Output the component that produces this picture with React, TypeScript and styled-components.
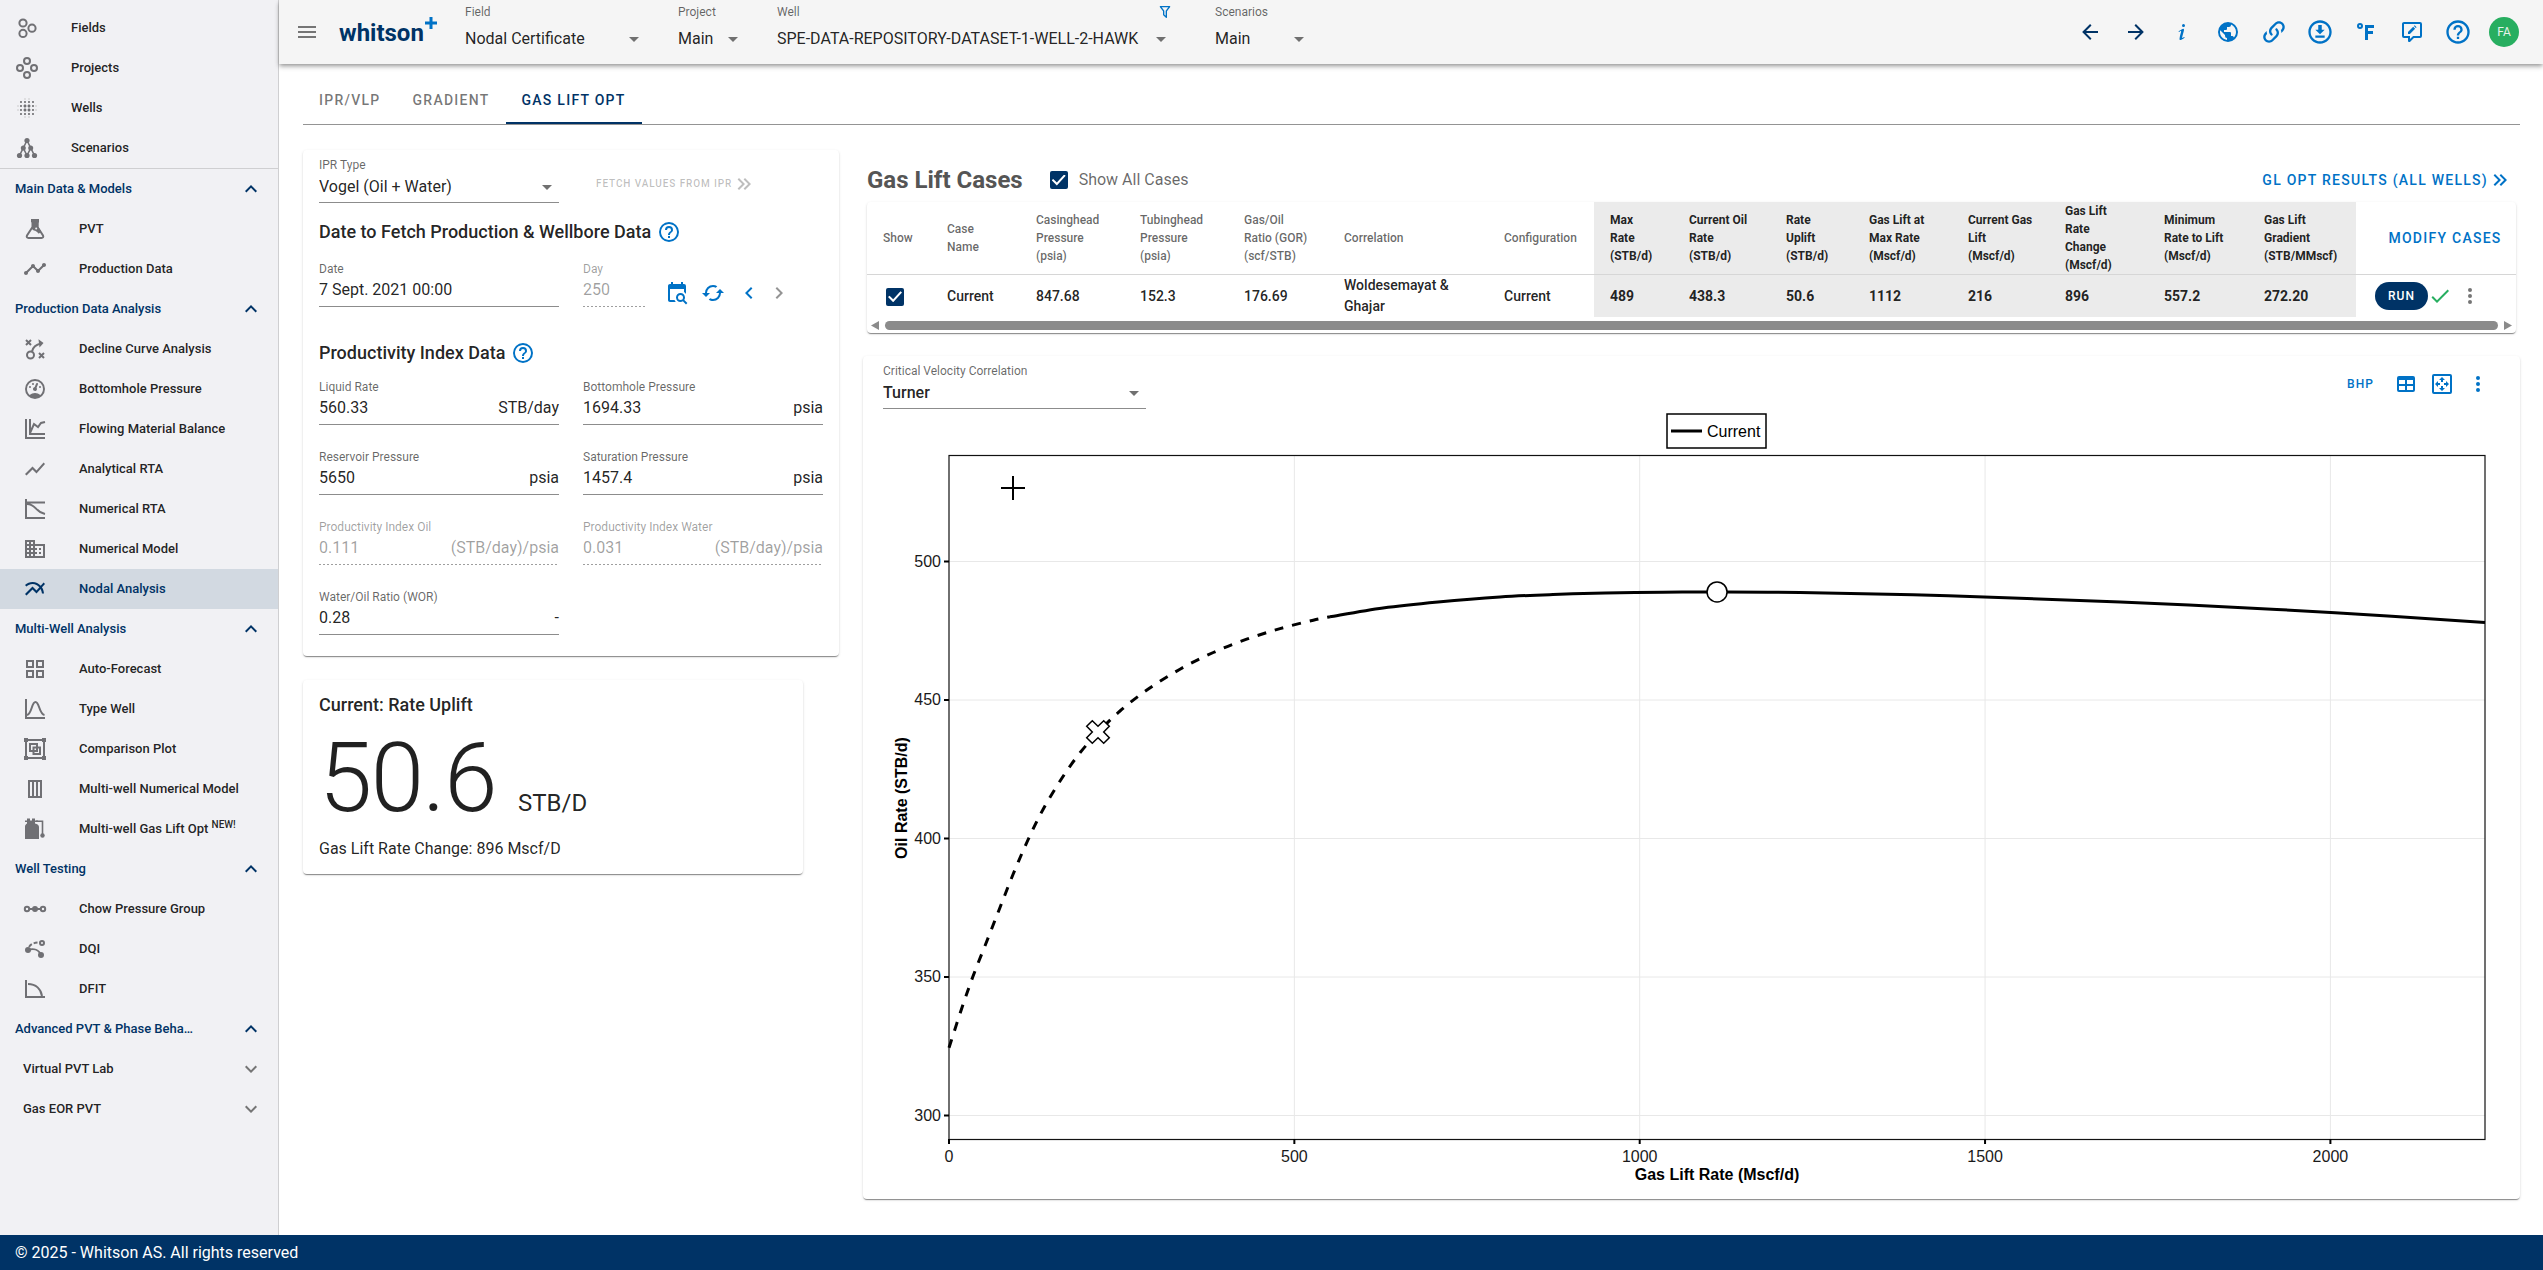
import React, { useId } from "react";
import styled, { createGlobalStyle, css } from "styled-components";
import { MdBlurOn, MdDomain, MdMultilineChart, MdShowChart, MdTimeline } from "react-icons/md";

const NAVY = "#003366";
const BLUE = "#0072c6";
const INK = "rgba(0, 0, 0, 0.87)";
const MUTED = "rgba(0, 0, 0, 0.6)";
const FAINT = "rgba(0, 0, 0, 0.38)";

const GlobalStyle = createGlobalStyle`
  *, *::before, *::after { box-sizing: border-box; }
  body {
    margin: 0;
    background: #fff;
    color: ${INK};
    font-family: Roboto, "Noto Sans", sans-serif;
    font-size: 16px;
    line-height: 24px;
  }
  button, input, select { font: inherit; color: inherit; }
  h1, h2, h3, p { margin: 0; }
`;

/* ---------- icons ---------- */

const PATHS = {
  menu: "M3,6H21V8H3V6M3,11H21V13H3V11M3,16H21V18H3V16Z",
  menuDown: "M7,10L12,15L17,10H7Z",
  left: "M20,11V13H8L13.5,18.5L12.08,19.92L4.16,12L12.08,4.08L13.5,5.5L8,11H20Z",
  right: "M4,11V13H16L10.5,18.5L11.92,19.92L19.84,12L11.92,4.08L10.5,5.5L16,11H4Z",
  info: "M13.5,4A1.5,1.5 0 0,0 12,5.5A1.5,1.5 0 0,0 13.5,7A1.5,1.5 0 0,0 15,5.5A1.5,1.5 0 0,0 13.5,4M13.14,8.77C11.95,8.87 8.7,11.46 8.7,11.46C8.5,11.61 8.56,11.6 8.72,11.88C8.88,12.15 8.86,12.17 9.05,12.04C9.25,11.91 9.58,11.7 10.13,11.36C12.25,10 10.47,13.14 9.56,18.43C9.2,21.05 11.56,19.7 12.17,19.3C12.77,18.91 14.38,17.8 14.54,17.69C14.76,17.54 14.6,17.42 14.43,17.17C14.31,17 14.19,17.12 14.19,17.12C13.54,17.55 12.35,18.45 12.19,17.88C12,17.31 13.22,13.4 13.89,10.71C14,10.07 14.3,8.67 13.14,8.77Z",
  earth: "M17.9,17.39C17.64,16.59 16.89,16 16,16H15V13A1,1 0 0,0 14,12H8V10H10A1,1 0 0,0 11,9V7H13A2,2 0 0,0 15,5V4.59C17.93,5.77 20,8.64 20,12C20,14.08 19.2,15.97 17.9,17.39M11,19.93C7.05,19.44 4,16.08 4,12C4,11.38 4.08,10.78 4.21,10.21L9,15V16A2,2 0 0,0 11,18M12,2A10,10 0 0,0 2,12A10,10 0 0,0 12,22A10,10 0 0,0 22,12A10,10 0 0,0 12,2Z",
  link: "M10.59,13.41C11,13.8 11,14.44 10.59,14.83C10.2,15.22 9.56,15.22 9.17,14.83C7.22,12.88 7.22,9.71 9.17,7.76V7.76L12.71,4.22C14.66,2.27 17.83,2.27 19.78,4.22C21.73,6.17 21.73,9.34 19.78,11.29L18.29,12.78C18.3,11.96 18.17,11.14 17.89,10.36L18.36,9.88C19.54,8.71 19.54,6.81 18.36,5.64C17.19,4.46 15.29,4.46 14.12,5.64L10.59,9.17C9.41,10.34 9.41,12.24 10.59,13.41M13.41,9.17C13.8,8.78 14.44,8.78 14.83,9.17C16.78,11.12 16.78,14.29 14.83,16.24V16.24L11.29,19.78C9.34,21.73 6.17,21.73 4.22,19.78C2.27,17.83 2.27,14.66 4.22,12.71L5.71,11.22C5.7,12.04 5.83,12.86 6.11,13.65L5.64,14.12C4.46,15.29 4.46,17.19 5.64,18.36C6.81,19.54 8.71,19.54 9.88,18.36L13.41,14.83C14.59,13.66 14.59,11.76 13.41,10.59C13,10.2 13,9.56 13.41,9.17Z",
  download: "M8 17V15H16V17H8M16 10L12 14L8 10H10.5V6H13.5V10H16M12 2C17.5 2 22 6.5 22 12C22 17.5 17.5 22 12 22C6.5 22 2 17.5 2 12C2 6.5 6.5 2 12 2M12 4C7.58 4 4 7.58 4 12C4 16.42 7.58 20 12 20C16.42 20 20 16.42 20 12C20 7.58 16.42 4 12 4Z",
  fahrenheit: "M11,20V5H20V8H14V11H19V14H14V20H11M6,3A3,3 0 0,1 9,6A3,3 0 0,1 6,9A3,3 0 0,1 3,6A3,3 0 0,1 6,3M6,5A1,1 0 0,0 5,6A1,1 0 0,0 6,7A1,1 0 0,0 7,6A1,1 0 0,0 6,5Z",
  comment: "M9,22A1,1 0 0,1 8,21V18H4A2,2 0 0,1 2,16V4C2,2.89 2.9,2 4,2H20A2,2 0 0,1 22,4V16A2,2 0 0,1 20,18H13.9L10.2,21.71C10,21.9 9.75,22 9.5,22H9M10,16V19.08L13.08,16H20V4H4V16H10M8,13.9V12L13.2,6.8L15.1,8.7L9.9,13.9H8M13.9,6.1L14.7,5.3L16.6,7.2L15.8,8L13.9,6.1Z",
  help: "M11,18H13V16H11V18M12,2A10,10 0 0,0 2,12A10,10 0 0,0 12,22A10,10 0 0,0 22,12A10,10 0 0,0 12,2M12,20C7.59,20 4,16.41 4,12C4,7.59 7.59,4 12,4C16.41,4 20,7.59 20,12C20,16.41 16.41,20 12,20M12,6A4,4 0 0,0 8,10H10A2,2 0 0,1 12,8A2,2 0 0,1 14,10C14,12 11,11.75 11,15H13C13,12.75 16,12.5 16,10A4,4 0 0,0 12,6Z",
  filter: "M15,19.88C15.04,20.18 14.94,20.5 14.71,20.71C14.32,21.1 13.69,21.1 13.3,20.71L9.29,16.7C9.06,16.47 8.96,16.16 9,15.87V10.75L4.21,4.62C3.87,4.19 3.95,3.56 4.38,3.22C4.57,3.08 4.78,3 5,3V3H19V3C19.22,3 19.43,3.08 19.62,3.22C20.05,3.56 20.13,4.19 19.79,4.62L15,10.75V19.88M7.04,5L11,10.06V15.58L13,17.58V10.05L16.96,5H7.04Z",
  doubleRight: "M5.59,7.41L7,6L13,12L7,18L5.59,16.59L10.17,12L5.59,7.41M11.59,7.41L13,6L19,12L13,18L11.59,16.59L16.17,12L11.59,7.41Z",
  calendarSearch: "M15.5,12C18,12 20,14 20,16.5C20,17.38 19.75,18.21 19.31,18.9L22.39,22L21,23.39L17.88,20.32C17.19,20.75 16.37,21 15.5,21C13,21 11,19 11,16.5C11,14 13,12 15.5,12M15.5,14A2.5,2.5 0 0,0 13,16.5A2.5,2.5 0 0,0 15.5,19A2.5,2.5 0 0,0 18,16.5A2.5,2.5 0 0,0 15.5,14M5,3H6V1H8V3H16V1H18V3H19A2,2 0 0,1 21,5V13.03C20.5,12.23 19.81,11.54 19,11V8H5V19H9.5C9.81,19.75 10.26,20.42 10.81,21H5C3.89,21 3,20.1 3,19V5C3,3.89 3.89,3 5,3Z",
  cached: "M19,8L15,12H18A6,6 0 0,1 12,18C11,18 10.03,17.75 9.2,17.3L7.74,18.76C8.97,19.54 10.43,20 12,20A8,8 0 0,0 20,12H23M6,12A6,6 0 0,1 12,6C13,6 13.97,6.25 14.8,6.7L16.26,5.24C15.03,4.46 13.57,4 12,4A8,8 0 0,0 4,12H1L5,16L9,12",
  chevronLeft: "M15.41,16.58L10.83,12L15.41,7.41L14,6L8,12L14,18L15.41,16.58Z",
  chevronRight: "M8.59,16.58L13.17,12L8.59,7.41L10,6L16,12L10,18L8.59,16.58Z",
  chevronUp: "M7.41,15.41L12,10.83L16.59,15.41L18,14L12,8L6,14L7.41,15.41Z",
  chevronDown: "M7.41,8.58L12,13.17L16.59,8.58L18,10L12,16L6,10L7.41,8.58Z",
  check: "M21,7L9,19L3.5,13.5L4.91,12.09L9,16.17L19.59,5.59L21,7Z",
  dots: "M12,16A2,2 0 0,1 14,18A2,2 0 0,1 12,20A2,2 0 0,1 10,18A2,2 0 0,1 12,16M12,10A2,2 0 0,1 14,12A2,2 0 0,1 12,14A2,2 0 0,1 10,12A2,2 0 0,1 12,10M12,4A2,2 0 0,1 14,6A2,2 0 0,1 12,8A2,2 0 0,1 10,6A2,2 0 0,1 12,4Z",
  table: "M5,4H19A2,2 0 0,1 21,6V18A2,2 0 0,1 19,20H5A2,2 0 0,1 3,18V6A2,2 0 0,1 5,4M5,8V12H11V8H5M13,8V12H19V8H13M5,14V18H11V14H5M13,14V18H19V14H13Z",
  gauge: "M12,2A10,10 0 0,0 2,12A10,10 0 0,0 12,22A10,10 0 0,0 22,12A10,10 0 0,0 12,2M12,4A8,8 0 0,1 20,12C20,14.4 19,16.5 17.3,18C15.9,16.7 14,16 12,16C10,16 8.2,16.7 6.7,18C5,16.5 4,14.4 4,12A8,8 0 0,1 12,4M14,5.89C13.62,5.9 13.26,6.15 13.1,6.54L11.81,9.77L11.71,10C11,10.13 10.41,10.6 10.14,11.26C9.73,12.29 10.23,13.45 11.26,13.86C12.29,14.27 13.45,13.77 13.86,12.74C14.12,12.08 14,11.32 13.57,10.76L13.67,10.5L14.96,7.29L14.97,7.26C15.17,6.75 14.92,6.17 14.41,5.96C14.28,5.91 14.15,5.89 14,5.89M10,6A1,1 0 0,0 9,7A1,1 0 0,0 10,8A1,1 0 0,0 11,7A1,1 0 0,0 10,6M7,9A1,1 0 0,0 6,10A1,1 0 0,0 7,11A1,1 0 0,0 8,10A1,1 0 0,0 7,9M17,9A1,1 0 0,0 16,10A1,1 0 0,0 17,11A1,1 0 0,0 18,10A1,1 0 0,0 17,9Z",
};

type PathName = keyof typeof PATHS;

const Icon = ({ name, size = 24 }: { name: PathName; size?: number }) => (
  <svg width={size} height={size} viewBox="0 0 24 24" fill="currentColor" aria-hidden="true">
    <path d={PATHS[name]} />
  </svg>
);

const Line = ({ children, width = 2 }: { children: React.ReactNode; width?: number }) => (
  <svg width={24} height={24} viewBox="0 0 24 24" fill="none" stroke="currentColor" strokeWidth={width} aria-hidden="true">
    {children}
  </svg>
);

const FitIcon = () => (
  <Line>
    <rect x="3" y="3" width="18" height="18" rx="1" />
    <path
      stroke="none"
      fill="currentColor"
      d="M12 5l3 3h-2v2h-2V8H9zM12 19l3-3h-2v-2h-2v2H9zM5 12l3-3v2h2v2H8v2zM19 12l-3-3v2h-2v2h2v2z"
    />
  </Line>
);

const NAV_ICONS: Record<string, React.ReactNode> = {
  fields: (
    <Line>
      <circle cx="8" cy="7" r="3.6" />
      <circle cx="8" cy="17.4" r="3.6" />
      <circle cx="17" cy="12.2" r="3.6" />
    </Line>
  ),
  projects: (
    <Line>
      <circle cx="12" cy="5" r="3" />
      <circle cx="5" cy="12" r="3" />
      <circle cx="19" cy="12" r="3" />
      <circle cx="12" cy="19" r="3" />
    </Line>
  ),
  wells: <MdBlurOn size={24} />,
  scenarios: (
    <Line width={1.6}>
      <path d="M12 4.5L4.5 19.5M12 4.5l7.5 15M12 19.5L8.2 12M12 19.5l3.8-7.5" />
      <g fill="currentColor" stroke="none">
        <circle cx="12" cy="4.5" r="2.6" />
        <circle cx="8.3" cy="12" r="2.5" />
        <circle cx="15.7" cy="12" r="2.5" />
        <circle cx="4.5" cy="19.5" r="2.6" />
        <circle cx="12" cy="19.5" r="2.6" />
        <circle cx="19.5" cy="19.5" r="2.6" />
      </g>
    </Line>
  ),
  flask: (
    <Line>
      <path d="M9.5 4v6L4 18.5C3.3 20 4 21 5.5 21h13c1.5 0 2.2-1 1.5-2.5L14.5 10V4" />
      <path fill="currentColor" stroke="none" d="M8 2h8v3l-.6 1v4l2.8 4.400-2.400 2.300c-1.600-1.700-3.200-3.300-5-3.300l-2-1.400 1-2.200V6L8 5z" />
      <circle cx="13.2" cy="11.6" r="1" fill="#f1f1f4" stroke="none" />
    </Line>
  ),
  timeline: <MdTimeline size={24} />,
  strategy: (
    <Line>
      <path d="M3 3l5 5M8 3L3 8M16 16l5 5M21 16l-5 5" />
      <circle cx="7.5" cy="18" r="3.5" />
      <path d="M9 14.5C10 10 13 7.5 18 6.5" />
      <path fill="currentColor" stroke="none" d="M15.5 2.2L20.5 6l-4 4.5z" />
    </Line>
  ),
  gauge: <Icon name="gauge" />,
  balance: (
    <Line>
      <path d="M3 2v19h19M7 2v15h15M7 16l4-9 4 3 3-4 4-1" />
    </Line>
  ),
  trend: <MdShowChart size={24} />,
  decline: (
    <Line>
      <path d="M3 2v19h19M3 5.5h19M4 7c9 0 8 8 18 10" />
    </Line>
  ),
  domain: <MdDomain size={24} />,
  nodal: <MdMultilineChart size={24} />,
  grid: (
    <Line>
      <path d="M4 4h6v6H4zM14 4h6v6h-6zM4 14h6v6H4zM14 14h6v6h-6z" />
    </Line>
  ),
  bell: (
    <Line>
      <path d="M3 2v19h19" />
      <path d="M4 18C9 17 8.5 5 12.5 5S16 17 21.5 18" />
    </Line>
  ),
  group: (
    <Line>
      <path d="M3 3h18v18H3z" />
      <path d="M7 7h7v7H7zM10.5 10.5h6.5v6.5h-6.5z" />
      <path fill="currentColor" stroke="none" d="M1 1h4v4H1zM19 1h4v4h-4zM1 19h4v4H1zM19 19h4v4h-4z" />
    </Line>
  ),
  columns: (
    <Line>
      <path d="M6 4h12v16H6zM10 4v16M14 4v16" />
    </Line>
  ),
  tanks: (
    <Line width={1.6}>
      <path fill="currentColor" stroke="none" d="M2 22V9.5C2 8 3 7 4 6.5V5H2V3.400h2V1.500h3v1.900h2V1.500h3v1.900h3V5h-3v1.500c2.500.5 4 1.800 4 3.500v12z" />
      <path d="M13 4.200h6.500V17" />
      <circle cx="19.5" cy="18.5" r="2.2" fill="currentColor" stroke="none" />
    </Line>
  ),
  chow: (
    <Line>
      <circle cx="4" cy="12" r="2.2" />
      <circle cx="20" cy="12" r="2.2" />
      <circle cx="12" cy="12" r="3" fill="currentColor" stroke="none" />
      <path d="M6.5 12h11" />
    </Line>
  ),
  dqi: (
    <Line>
      <circle cx="19" cy="6" r="2" />
      <circle cx="5" cy="13" r="3" fill="currentColor" stroke="none" />
      <circle cx="18" cy="18" r="3" fill="currentColor" stroke="none" />
      <path d="M5 13c6-2 11 0 13 5" />
      <path d="M6 10c2-3 5-4.500 11-4.500" strokeDasharray="4 2" />
    </Line>
  ),
  dfit: (
    <Line>
      <path d="M3 3v17h19M5 7c8 0 13 5 14 12" />
    </Line>
  ),
};

/* ---------- shell ---------- */

const Shell = styled.div`
  display: grid;
  grid-template-columns: 279px minmax(0, 1fr);
  grid-template-rows: 1fr auto;
  min-height: 100vh;
`;

const Footer = styled.footer`
  grid-column: 1 / -1;
  padding: 6px 15px 5px;
  background: ${NAVY};
  color: #fff;
`;

const Sidebar = styled.nav`
  padding-top: 8px;
  background: #f1f1f4;
  border-right: 1px solid #cfcfd1;
  font-size: 13px;
  font-weight: 500;
`;

const NavList = styled.ul<{ $ruled?: boolean }>`
  margin: 0;
  padding: 0;
  list-style: none;
  ${(p) => p.$ruled && css`border-bottom: 1px solid #cfcfd1;`}
`;

const NavItem = styled.a<{ $nested?: boolean; $active?: boolean }>`
  display: flex;
  align-items: center;
  gap: 32px;
  height: 40px;
  padding-left: ${(p) => (p.$nested ? 23 : 15)}px;
  text-decoration: none;
  white-space: nowrap;
  color: ${(p) => (p.$active ? NAVY : INK)};
  background: ${(p) => (p.$active ? "#d2d9e1" : "transparent")};
  svg { flex: none; color: ${(p) => (p.$active ? NAVY : "#707074")}; }
`;

const NavSup = styled.sup`
  font-size: 10px;
  line-height: 10px;
`;

const NavGroup = styled.button<{ $sub?: boolean }>`
  display: flex;
  align-items: center;
  justify-content: space-between;
  width: 100%;
  height: 40px;
  padding: 0 15px 0 ${(p) => (p.$sub ? 23 : 15)}px;
  border: 0;
  background: none;
  color: ${(p) => (p.$sub ? INK : NAVY)};
  text-align: left;
  white-space: nowrap;
  svg { flex: none; color: ${(p) => (p.$sub ? "#757575" : NAVY)}; }
`;

const Page = styled.div`
  display: flex;
  flex-direction: column;
  min-width: 0;
`;

/* ---------- top bar ---------- */

const TopBar = styled.header`
  display: flex;
  align-items: flex-start;
  height: 64px;
  padding: 0 16px;
  background: #f5f5f5;
  box-shadow: 0 2px 4px -1px rgba(0, 0, 0, 0.3), 0 3px 5px rgba(0, 0, 0, 0.2);
`;

const IconButton = styled.button<{ $color?: string; $width?: number; $height?: number }>`
  display: inline-flex;
  align-items: center;
  justify-content: center;
  flex: none;
  width: ${(p) => p.$width ?? 24}px;
  height: ${(p) => p.$height ?? 24}px;
  padding: 0;
  border: 0;
  background: none;
  color: ${(p) => p.$color ?? BLUE};
`;

const Logo = styled.a`
  display: flex;
  align-items: center;
  flex: 0 0 126px;
  height: 64px;
  margin-left: 20px;
  padding-top: 1px;
  color: ${NAVY};
  font-size: 24px;
  font-weight: 700;
  text-decoration: none;
  svg { align-self: flex-start; margin: 16px 0 0 1px; color: ${BLUE}; }
`;

const BarFields = styled.div`
  display: flex;
  gap: 32px;
  padding-top: 1px;
  > :last-child { margin-left: 10px; }
`;

const BarField = styled.div<{ $width: number }>`
  width: ${(p) => p.$width}px;
`;

const BarLabelRow = styled.div`
  display: flex;
  justify-content: space-between;
  align-items: center;
  height: 22px;
  color: ${MUTED};
  font-size: 12px;
  svg { color: ${BLUE}; }
`;

const SelectBox = styled.div<{ $height: number }>`
  display: grid;
  grid-template-columns: minmax(0, 1fr);
  align-items: center;
  height: ${(p) => p.$height}px;
  > * { grid-area: 1 / 1; }
  svg { justify-self: end; pointer-events: none; color: #707070; }
`;

const Select = styled.select<{ $strong?: boolean }>`
  width: 100%;
  padding: 0;
  border: 0;
  appearance: none;
  background: none;
  font-weight: ${(p) => (p.$strong ? 500 : 400)};
`;

const BarActions = styled.div`
  display: flex;
  align-items: center;
  height: 64px;
  margin-left: auto;
`;

const AvatarButton = styled.button`
  width: 30px;
  height: 30px;
  margin: 0 8px;
  padding: 0;
  border: 0;
  border-radius: 50%;
  background: #27ae60;
  color: #e6f2ea;
  font-size: 12px;
  line-height: 30px;
`;

/* ---------- content ---------- */

const Content = styled.main`
  padding: 12px 23px 36px 24px;
`;

const Tabs = styled.div`
  display: flex;
  border-bottom: 1px solid #949494;
`;

const Tab = styled.button<{ $active?: boolean }>`
  height: 48px;
  padding: 2px 16px 0;
  border: 0;
  border-bottom: 2px solid ${(p) => (p.$active ? NAVY : "transparent")};
  background: none;
  color: ${(p) => (p.$active ? NAVY : "rgba(0, 0, 0, 0.54)")};
  font-size: 14px;
  font-weight: 500;
  letter-spacing: 0.09em;
`;

const Columns = styled.div`
  display: grid;
  grid-template-columns: 536px minmax(0, 1fr);
  gap: 24px;
  align-items: start;
  padding-top: 25px;
`;

const Stack = styled.div`
  display: flex;
  flex-direction: column;
  gap: 24px;
`;

const cardSurface = css`
  border-radius: 4px;
  background: #fff;
  box-shadow: 0 2px 1px -1px rgba(0, 0, 0, 0.3), 0 1px 1px rgba(0, 0, 0, 0.16), 0 1px 3px rgba(0, 0, 0, 0.12);
`;

const FormCard = styled.section`
  ${cardSurface}
  padding: 5px 16px 21px;
`;

const FieldGrid = styled.div`
  display: grid;
  grid-template-columns: 1fr 1fr;
  gap: 22px 24px;
`;

const FieldRoot = styled.div<{ $disabled?: boolean; $width?: number }>`
  display: flex;
  flex-direction: column;
  width: ${(p) => (p.$width ? `${p.$width}px` : "auto")};
  height: 48px;
  color: ${(p) => (p.$disabled ? FAINT : INK)};
  background: ${(p) =>
    p.$disabled
      ? "repeating-linear-gradient(to right, rgba(0, 0, 0, 0.38) 0 2px, transparent 2px 4px) bottom / 100% 1px no-repeat"
      : "linear-gradient(#8c8c8c, #8c8c8c) bottom / 100% 1px no-repeat"};
  label {
    height: 20px;
    color: ${(p) => (p.$disabled ? FAINT : MUTED)};
    font-size: 12px;
    line-height: 20px;
  }
`;

const Control = styled.div`
  display: flex;
  align-items: center;
  height: 22px;
  input {
    flex: 1;
    min-width: 0;
    width: 0;
    padding: 0;
    border: 0;
    background: none;
  }
`;

const FormHeading = styled.h2<{ $first?: boolean }>`
  display: flex;
  align-items: center;
  gap: 6px;
  margin: ${(p) => (p.$first ? "15px 0 13px" : "32px 0 10px")};
  font-size: 18px;
  font-weight: 500;
  line-height: 28px;
`;

const FetchCell = styled.div`
  display: flex;
  align-items: center;
  padding: 10px 0 0 13px;
`;

const TextButton = styled.button<{ $size?: number; $muted?: boolean }>`
  display: inline-flex;
  align-items: center;
  padding: 0;
  border: 0;
  background: none;
  color: ${(p) => (p.$muted ? "rgba(0, 0, 0, 0.26)" : BLUE)};
  font-size: ${(p) => p.$size ?? 14}px;
  font-weight: 500;
  letter-spacing: 0.09em;
  white-space: nowrap;
`;

const DayCell = styled.div`
  display: flex;
  align-items: flex-end;
`;

const DayActions = styled.div`
  display: flex;
  align-items: center;
  height: 28px;
  padding-left: 12px;
`;

const UpliftCard = styled.section`
  ${cardSurface}
  width: 500px;
  padding: 11px 16px 13px;
  h2 { font-size: 18px; font-weight: 500; line-height: 28px; }
`;

const Figure = styled.p`
  display: flex;
  align-items: baseline;
  gap: 22px;
  height: 118px;
  font-size: 24px;
  line-height: 118px;
  strong { font-size: 96px; font-weight: 300; letter-spacing: -0.015em; }
`;

/* ---------- cases table ---------- */

const CasesBar = styled.div`
  display: flex;
  align-items: center;
  gap: 27px;
  height: 52px;
  margin: 0 4px;
  padding-top: 8px;
  h1 { color: #555; font-size: 24px; font-weight: 700; }
`;

const CheckLabel = styled.label`
  display: flex;
  align-items: center;
  gap: 11px;
  color: ${MUTED};
`;

const Checkbox = styled.input.attrs({ type: "checkbox" })`
  display: inline-grid;
  place-content: center;
  width: 18px;
  height: 18px;
  margin: 0;
  border-radius: 2px;
  appearance: none;
  background: ${NAVY};
  vertical-align: middle;
  &::before {
    content: "";
    width: 14px;
    height: 11px;
    background: #fff;
    clip-path: polygon(0 52%, 11% 40%, 37% 72%, 89% 0, 100% 12%, 37% 100%);
  }
`;

const PushRight = styled.div`
  margin-left: auto;
  padding-right: 4px;
`;

const TableCard = styled.section`
  ${cardSurface}
  margin: 0 4px 23px;
`;

const Table = styled.table`
  width: 100%;
  border-collapse: separate;
  border-spacing: 0;
  table-layout: fixed;
`;

const Th = styled.th<{ $result?: boolean }>`
  height: 73px;
  padding: 0 0 0 16px;
  border-bottom: 1px solid #d6d6d6;
  background: ${(p) => (p.$result ? "#ebebeb" : "transparent")};
  color: ${(p) => (p.$result ? "rgba(0, 0, 0, 0.87)" : MUTED)};
  font-size: 12px;
  font-weight: ${(p) => (p.$result ? 700 : 500)};
  line-height: 18px;
  text-align: left;
  white-space: pre-line;
`;

const ActionTh = styled(Th)`
  padding-left: 18px;
  text-align: center;
`;

const Td = styled.td<{ $result?: boolean }>`
  height: 42px;
  padding: 0 0 0 16px;
  background: ${(p) => (p.$result ? "#ebebeb" : "transparent")};
  font-size: 14px;
  font-weight: ${(p) => (p.$result ? 700 : 500)};
  line-height: 21px;
`;

const CheckTd = styled(Td)`
  padding-left: 19px;
`;

const RowActions = styled.div`
  display: flex;
  align-items: center;
  padding-left: 3px;
`;

const RunButton = styled.button`
  width: 53px;
  height: 28px;
  padding: 0;
  border: 0;
  border-radius: 14px;
  background: ${NAVY};
  color: #fff;
  font-size: 12px;
  font-weight: 500;
  letter-spacing: 0.09em;
`;

const ScrollBar = styled.div`
  display: flex;
  align-items: center;
  gap: 6px;
  height: 16px;
  padding: 0 4px;
  color: #8b8b8b;
`;

const ScrollThumb = styled.div`
  flex: 1;
  height: 9px;
  border-radius: 5px;
  background: #8b8b8b;
`;

/* ---------- chart ---------- */

const PlotCard = styled.section`
  ${cardSurface}
  padding-top: 5px;
`;

const PlotBar = styled.div`
  display: flex;
  align-items: flex-start;
  justify-content: space-between;
  padding: 0 30px 0 20px;
`;

const PlotActions = styled.div`
  display: flex;
  align-items: center;
  gap: 12px;
  padding-top: 11px;
  > :first-child { margin-right: 8px; }
`;

const PlotSvg = styled.svg`
  display: block;
  width: 100%;
  height: auto;
  font-family: "Liberation Sans", Arial, sans-serif;
  font-size: 16px;
`;

const LEFT = 86;
const RIGHT = 1622;
const TOP = 46;
const BOTTOM = 730;
const px = (v: number) => LEFT + v * 0.6907;
const py = (v: number) => 152.5 + (500 - v) * 2.77;

type Point = [number, number];

const DASHED: Point[] = [
  [86, 638.8], [98.7, 599.5], [110.3, 566.5], [123.7, 532.5], [137, 498.5], [150.3, 464.8],
  [164.7, 431.5], [180.3, 400], [198.7, 369.5], [217, 343.8], [235, 323.5], [257, 302],
  [285.3, 280], [317, 260.2], [350.3, 243.5], [383.7, 230.2], [417, 219.6], [450.3, 211.2], [467, 207.8],
];

const SOLID: Point[] = [
  [467, 207.8], [520, 199], [575, 193], [637, 188], [690, 185.5], [742, 184], [800, 183.2], [853, 183],
  [937, 183.5], [1050, 185.8], [1164, 189.5], [1326, 196], [1472, 203.8], [1622, 213.5],
];

const smooth = (pts: Point[]) =>
  pts.reduce((d, p, i) => {
    if (i === 0) return `M${p[0]},${p[1]}`;
    const a = pts[Math.max(i - 2, 0)];
    const b = pts[i - 1];
    const c = pts[Math.min(i + 1, pts.length - 1)];
    return `${d}C${b[0] + (p[0] - a[0]) / 6},${b[1] + (p[1] - a[1]) / 6} ${p[0] - (c[0] - b[0]) / 6},${p[1] - (c[1] - b[1]) / 6} ${p[0]},${p[1]}`;
  }, "");

const Plot = () => (
  <PlotSvg viewBox="0 0 1657 790" role="img" aria-label="Oil rate against gas lift rate">
    <g stroke="#e8e8e8">
      {[500, 1000, 1500, 2000].map((v) => (
        <line key={v} x1={px(v)} x2={px(v)} y1={TOP} y2={BOTTOM} />
      ))}
      {[300, 350, 400, 450, 500].map((v) => (
        <line key={v} x1={LEFT} x2={RIGHT} y1={py(v)} y2={py(v)} />
      ))}
    </g>
    <rect x={LEFT} y={TOP + 0.5} width={RIGHT - LEFT} height={BOTTOM - TOP} fill="none" stroke="#111" strokeWidth={1.2} />
    <g stroke="#000" strokeWidth={2}>
      {[0, 500, 1000, 1500, 2000].map((v) => (
        <line key={v} x1={px(v)} x2={px(v)} y1={BOTTOM} y2={BOTTOM + 5} />
      ))}
      {[300, 350, 400, 450, 500].map((v) => (
        <line key={v} x1={LEFT - 5} x2={LEFT} y1={py(v)} y2={py(v)} />
      ))}
    </g>
    <g fill="#1a1a1a">
      {[0, 500, 1000, 1500, 2000].map((v) => (
        <text key={v} x={px(v)} y={753} textAnchor="middle">{v}</text>
      ))}
      {[300, 350, 400, 450, 500].map((v) => (
        <text key={v} x={78} y={py(v) + 5} textAnchor="end">{v}</text>
      ))}
    </g>
    <g fontWeight={700} textAnchor="middle">
      <text x={854} y={771}>Gas Lift Rate (Mscf/d)</text>
      <text transform="translate(44 389) rotate(-90)">Oil Rate (STB/d)</text>
    </g>
    <g fill="none" stroke="#000" strokeWidth={3}>
      <path d={smooth(DASHED)} strokeDasharray="9 9" />
      <path d={smooth(SOLID)} />
    </g>
    <path
      transform="translate(235 323)"
      d="M0-5.7L5.7-11.3 11.3-5.7 5.7 0 11.3 5.7 5.7 11.3 0 5.7-5.7 11.3-11.3 5.7-5.7 0-11.3-5.7-5.7-11.3Z"
      fill="#fff"
      stroke="#000"
      strokeWidth={1.5}
    />
    <circle cx={px(1112)} cy={py(489)} r={10} fill="#fff" stroke="#000" strokeWidth={1.5} />
    <path d="M138 79h24M150 67v24" stroke="#000" strokeWidth={2} />
    <rect x={804} y={5} width={99} height={34} fill="#fff" stroke="#000" strokeWidth={1.5} />
    <line x1={808} x2={839} y1={22} y2={22} stroke="#000" strokeWidth={3} />
    <text x={844} y={28}>Current</text>
  </PlotSvg>
);

/* ---------- small components ---------- */

type FieldProps = { label: string; value: string; unit?: string; disabled?: boolean; width?: number };

const TextField = ({ label, value, unit, disabled, width }: FieldProps) => {
  const id = useId();
  return (
    <FieldRoot $disabled={disabled} $width={width}>
      <label htmlFor={id}>{label}</label>
      <Control>
        <input id={id} type="text" defaultValue={value} disabled={disabled} />
        {unit && <span>{unit}</span>}
      </Control>
    </FieldRoot>
  );
};

const SelectField = ({ label, value, width, strong }: { label: string; value: string; width?: number; strong?: boolean }) => {
  const id = useId();
  return (
    <FieldRoot $width={width}>
      <label htmlFor={id}>{label}</label>
      <SelectBox $height={22}>
        <Select id={id} $strong={strong}>
          <option>{value}</option>
        </Select>
        <Icon name="menuDown" />
      </SelectBox>
    </FieldRoot>
  );
};

const BarSelect = ({ label, value, width, filter }: { label: string; value: string; width: number; filter?: boolean }) => {
  const id = useId();
  return (
    <BarField $width={width}>
      <BarLabelRow>
        <label htmlFor={id}>{label}</label>
        {filter && <Icon name="filter" size={16} />}
      </BarLabelRow>
      <SelectBox $height={32}>
        <Select id={id}>
          <option>{value}</option>
        </Select>
        <Icon name="menuDown" />
      </SelectBox>
    </BarField>
  );
};

const TOP_NAV = [
  ["fields", "Fields"],
  ["projects", "Projects"],
  ["wells", "Wells"],
  ["scenarios", "Scenarios"],
];

const NAV: { title: string; items: string[][] }[] = [
  { title: "Main Data & Models", items: [["flask", "PVT"], ["timeline", "Production Data"]] },
  {
    title: "Production Data Analysis",
    items: [
      ["strategy", "Decline Curve Analysis"],
      ["gauge", "Bottomhole Pressure"],
      ["balance", "Flowing Material Balance"],
      ["trend", "Analytical RTA"],
      ["decline", "Numerical RTA"],
      ["domain", "Numerical Model"],
      ["nodal", "Nodal Analysis"],
    ],
  },
  {
    title: "Multi-Well Analysis",
    items: [
      ["grid", "Auto-Forecast"],
      ["bell", "Type Well"],
      ["group", "Comparison Plot"],
      ["columns", "Multi-well Numerical Model"],
      ["tanks", "Multi-well Gas Lift Opt", "NEW!"],
    ],
  },
  { title: "Well Testing", items: [["chow", "Chow Pressure Group"], ["dqi", "DQI"], ["dfit", "DFIT"]] },
  { title: "Advanced PVT & Phase Beha…", items: [] },
];

const ACTIONS: { name: PathName; label: string; size?: number; navy?: boolean }[] = [
  { name: "left", label: "Back", navy: true },
  { name: "right", label: "Forward", navy: true },
  { name: "info", label: "Information" },
  { name: "earth", label: "Map" },
  { name: "link", label: "Copy link", size: 28 },
  { name: "download", label: "Download", size: 28 },
  { name: "fahrenheit", label: "Units" },
  { name: "comment", label: "Feedback" },
  { name: "help", label: "Help", size: 28 },
];

const COLUMNS: { head: string; value: string; width: number; result?: boolean }[] = [
  { head: "Case\nName", value: "Current", width: 89 },
  { head: "Casinghead\nPressure\n(psia)", value: "847.68", width: 104 },
  { head: "Tubinghead\nPressure\n(psia)", value: "152.3", width: 104 },
  { head: "Gas/Oil\nRatio (GOR)\n(scf/STB)", value: "176.69", width: 100 },
  { head: "Correlation", value: "Woldesemayat & Ghajar", width: 160 },
  { head: "Configuration", value: "Current", width: 106 },
  { head: "Max\nRate\n(STB/d)", value: "489", width: 79, result: true },
  { head: "Current Oil\nRate\n(STB/d)", value: "438.3", width: 97, result: true },
  { head: "Rate\nUplift\n(STB/d)", value: "50.6", width: 83, result: true },
  { head: "Gas Lift at\nMax Rate\n(Mscf/d)", value: "1112", width: 99, result: true },
  { head: "Current Gas\nLift\n(Mscf/d)", value: "216", width: 97, result: true },
  { head: "Gas Lift\nRate\nChange\n(Mscf/d)", value: "896", width: 99, result: true },
  { head: "Minimum\nRate to Lift\n(Mscf/d)", value: "557.2", width: 100, result: true },
  { head: "Gas Lift\nGradient\n(STB/MMscf)", value: "272.20", width: 108, result: true },
];

const Col = styled.col<{ $width: number }>`
  width: ${(p) => p.$width}px;
`;

const SideNav = () => (
  <Sidebar>
    <NavList $ruled>
      {TOP_NAV.map(([icon, text]) => (
        <li key={text}>
          <NavItem href="#">
            {NAV_ICONS[icon]}
            {text}
          </NavItem>
        </li>
      ))}
    </NavList>
    {NAV.map((group) => (
      <React.Fragment key={group.title}>
        <NavGroup>
          {group.title}
          <Icon name="chevronUp" />
        </NavGroup>
        <NavList>
          {group.items.map(([icon, text, badge]) => (
            <li key={text}>
              <NavItem href="#" $nested $active={icon === "nodal"}>
                {NAV_ICONS[icon]}
                <span>
                  {text} {badge && <NavSup>{badge}</NavSup>}
                </span>
              </NavItem>
            </li>
          ))}
        </NavList>
      </React.Fragment>
    ))}
    {["Virtual PVT Lab", "Gas EOR PVT"].map((text) => (
      <NavGroup key={text} $sub>
        {text}
        <Icon name="chevronDown" />
      </NavGroup>
    ))}
  </Sidebar>
);

const Header = () => (
  <TopBar>
    <IconButton $color="#757575" $height={64} aria-label="Toggle menu">
      <Icon name="menu" />
    </IconButton>
    <Logo href="#">
      whitson
      <svg width="12" height="12" viewBox="0 0 12 12" stroke="currentColor" strokeWidth="3" aria-label="plus">
        <path d="M6 0v12M0 6h12" />
      </svg>
    </Logo>
    <BarFields>
      <BarSelect label="Field" value="Nodal Certificate" width={181} />
      <BarSelect label="Project" value="Main" width={67} />
      <BarSelect label="Well" value="SPE-DATA-REPOSITORY-DATASET-1-WELL-2-HAWK" width={396} filter />
      <BarSelect label="Scenarios" value="Main" width={96} />
    </BarFields>
    <BarActions>
      {ACTIONS.map((a) => (
        <IconButton key={a.name} $width={46} $height={46} $color={a.navy ? NAVY : BLUE} aria-label={a.label}>
          <Icon name={a.name} size={a.size} />
        </IconButton>
      ))}
      <AvatarButton>FA</AvatarButton>
    </BarActions>
  </TopBar>
);

const InputsCard = () => (
  <FormCard>
    <FieldGrid>
      <SelectField label="IPR Type" value="Vogel (Oil + Water)" />
      <FetchCell>
        <TextButton $size={10} $muted disabled>
          FETCH VALUES FROM IPR
          <Icon name="doubleRight" />
        </TextButton>
      </FetchCell>
    </FieldGrid>
    <FormHeading $first>
      Date to Fetch Production &amp; Wellbore Data
      <IconButton aria-label="Help on dates"><Icon name="help" /></IconButton>
    </FormHeading>
    <FieldGrid>
      <TextField label="Date" value="7 Sept. 2021 00:00" />
      <DayCell>
        <TextField label="Day" value="250" width={64} disabled />
        <DayActions>
          <IconButton $width={36} aria-label="Pick date"><Icon name="calendarSearch" /></IconButton>
          <IconButton $width={36} aria-label="Refresh"><Icon name="cached" /></IconButton>
          <IconButton $width={36} aria-label="Previous day"><Icon name="chevronLeft" /></IconButton>
          <IconButton $color="#949494" aria-label="Next day"><Icon name="chevronRight" /></IconButton>
        </DayActions>
      </DayCell>
    </FieldGrid>
    <FormHeading>
      Productivity Index Data
      <IconButton aria-label="Help on productivity index"><Icon name="help" /></IconButton>
    </FormHeading>
    <FieldGrid>
      <TextField label="Liquid Rate" value="560.33" unit="STB/day" />
      <TextField label="Bottomhole Pressure" value="1694.33" unit="psia" />
      <TextField label="Reservoir Pressure" value="5650" unit="psia" />
      <TextField label="Saturation Pressure" value="1457.4" unit="psia" />
      <TextField label="Productivity Index Oil" value="0.111" unit="(STB/day)/psia" disabled />
      <TextField label="Productivity Index Water" value="0.031" unit="(STB/day)/psia" disabled />
      <TextField label="Water/Oil Ratio (WOR)" value="0.28" unit="-" />
    </FieldGrid>
  </FormCard>
);

const CasesTable = () => (
  <TableCard>
    <Table>
      <colgroup>
        <Col $width={64} />
        {COLUMNS.map((c) => (
          <Col key={c.head} $width={c.width} />
        ))}
        <Col $width={160} />
      </colgroup>
      <thead>
        <tr>
          <Th>Show</Th>
          {COLUMNS.map((c) => (
            <Th key={c.head} $result={c.result}>{c.head}</Th>
          ))}
          <ActionTh>
            <TextButton>MODIFY CASES</TextButton>
          </ActionTh>
        </tr>
      </thead>
      <tbody>
        <tr>
          <CheckTd>
            <Checkbox defaultChecked aria-label="Show Current" />
          </CheckTd>
          {COLUMNS.map((c) => (
            <Td key={c.head} $result={c.result}>{c.value}</Td>
          ))}
          <Td>
            <RowActions>
              <RunButton>RUN</RunButton>
              <IconButton as="span" $color="#27ae60"><Icon name="check" /></IconButton>
              <IconButton $width={36} $color="#757575" aria-label="Case menu"><Icon name="dots" /></IconButton>
            </RowActions>
          </Td>
        </tr>
      </tbody>
    </Table>
    <ScrollBar>
      <svg width="8" height="9" viewBox="0 0 8 9" fill="currentColor"><path d="M8 0v9L0 4.5z" /></svg>
      <ScrollThumb />
      <svg width="8" height="9" viewBox="0 0 8 9" fill="currentColor"><path d="M0 0v9l8-4.5z" /></svg>
    </ScrollBar>
  </TableCard>
);

export default function App() {
  return (
    <>
      <GlobalStyle />
      <Shell>
        <SideNav />
        <Page>
          <Header />
          <Content>
            <Tabs role="tablist">
              <Tab role="tab">IPR/VLP</Tab>
              <Tab role="tab">GRADIENT</Tab>
              <Tab role="tab" aria-selected="true" $active>GAS LIFT OPT</Tab>
            </Tabs>
            <Columns>
              <Stack>
                <InputsCard />
                <UpliftCard>
                  <h2>Current: Rate Uplift</h2>
                  <Figure>
                    <strong>50.6</strong> STB/D
                  </Figure>
                  <p>Gas Lift Rate Change: 896 Mscf/D</p>
                </UpliftCard>
              </Stack>
              <div>
                <CasesBar>
                  <h1>Gas Lift Cases</h1>
                  <CheckLabel>
                    <Checkbox defaultChecked />
                    Show All Cases
                  </CheckLabel>
                  <PushRight>
                    <TextButton>
                      GL OPT RESULTS (ALL WELLS)
                      <Icon name="doubleRight" />
                    </TextButton>
                  </PushRight>
                </CasesBar>
                <CasesTable />
                <PlotCard>
                  <PlotBar>
                    <SelectField label="Critical Velocity Correlation" value="Turner" width={263} strong />
                    <PlotActions>
                      <TextButton $size={12}>BHP</TextButton>
                      <IconButton aria-label="Show data table"><Icon name="table" /></IconButton>
                      <IconButton aria-label="Fit chart"><FitIcon /></IconButton>
                      <IconButton aria-label="Chart menu"><Icon name="dots" /></IconButton>
                    </PlotActions>
                  </PlotBar>
                  <Plot />
                </PlotCard>
              </div>
            </Columns>
          </Content>
        </Page>
        <Footer>© 2025 - Whitson AS. All rights reserved</Footer>
      </Shell>
    </>
  );
}
